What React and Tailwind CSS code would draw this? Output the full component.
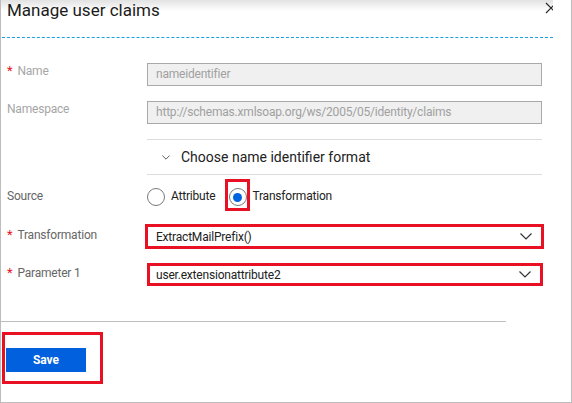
import React from "react";

function Star() {
  return <span className="text-[#e81123] mr-[5px] text-[13px]">*</span>;
}

function Chevron({ w = 12, h = 7 }) {
  return (
    <svg width={w} height={h} viewBox="0 0 12 7" fill="none" stroke="#333" strokeWidth="1.2">
      <path d="M0.5 0.5L6 6L11.5 0.5" />
    </svg>
  );
}

function Radio({ checked }) {
  return (
    <div className="w-[18px] h-[18px] rounded-full border border-[#7a7a7a] bg-white flex items-center justify-center">
      {checked && <div className="w-[9px] h-[9px] rounded-full bg-[#0063e1]" />}
    </div>
  );
}

export default function App() {
  return (
    <div className="w-[572px] h-[403px] bg-white border-l border-r border-b border-[#bdbdbd] flex flex-col overflow-hidden font-['Segoe_UI',Roboto,sans-serif] text-[#222]">
      <div className="w-[552px]">
        {/* Header */}
        <div className="h-[37px] relative overflow-hidden bg-[linear-gradient(to_bottom,#e2e2e2,#ffffff_11px)] pl-[6px]">
          <h1 className="text-[17px] leading-[20px] text-[#1b1b1b]">Manage user claims</h1>
          <svg className="absolute right-[-4px] top-[2px]" width="12" height="12" viewBox="0 0 12 12" stroke="#222" strokeWidth="1.1">
            <path d="M1 1L11 11M11 1L1 11" />
          </svg>
        </div>
        <div className="ml-[1px] border-t border-dashed border-[#1ba1e2]" />

        {/* Form */}
        <div className="pl-[6px] pt-[25px] flex flex-col text-[12px] tracking-[-0.2px]">
          <div className="flex items-start">
            <div className="w-[140px] leading-[16px] text-[#a6a6a6]">
              <Star />Name
            </div>
            <div className="w-[395px] h-[23px] bg-[#f0f0f0] border border-[#a9a9a9] pl-[8px] leading-[21px] text-[#a0a0a0]">
              nameidentifier
            </div>
          </div>

          <div className="flex items-start mt-[15px]">
            <div className="w-[140px] leading-[16px] text-[#a6a6a6]">Namespace</div>
            <div className="w-[395px] h-[23px] bg-[#f0f0f0] border border-[#a9a9a9] pl-[8px] leading-[21px] text-[#a0a0a0] whitespace-nowrap overflow-hidden">
              http://schemas.xmlsoap.org/ws/2005/05/identity/claims
            </div>
          </div>

          <div className="flex mt-[15px]">
            <div className="w-[140px]" />
            <div className="w-[395px] h-[36px] border-t border-b border-[#dcdcdc] flex items-center pl-[15px] gap-[11px]">
              <Chevron w={8} h={5} />
              <span className="text-[14px] tracking-normal text-[#222]">Choose name identifier format</span>
            </div>
          </div>

          <div className="flex items-center mt-[4px] h-[32px]">
            <div className="w-[140px] text-[#666] pt-[2px]">Source</div>
            <div className="flex items-center">
              <div className="pt-[3px]">
                <Radio />
              </div>
              <span className="ml-[6px] pt-[2px] text-[#222]">Attribute</span>
              <div className="ml-[10px] w-[25px] h-[32px] border-[3px] border-[#e81123] flex justify-center pt-[6px]">
                <Radio checked />
              </div>
              <span className="ml-[2px] pt-[2px] text-[#222]">Transformation</span>
            </div>
          </div>

          <div className="flex items-center mt-[13px]">
            <div className="w-[140px] text-[#666] -mt-[4px]">
              <Star />Transformation
            </div>
            <div className="-ml-[2px] w-[399px] h-[25px] border-[3px] border-[#e81123] flex items-center justify-between pl-[8px] pr-[9px]">
              <span className="text-[#222]">ExtractMailPrefix()</span>
              <Chevron />
            </div>
          </div>

          <div className="flex items-center mt-[14px]">
            <div className="w-[140px] text-[#666] -mt-[4px]">
              <Star />Parameter 1
            </div>
            <div className="w-[396px] h-[23px] border-[3px] border-[#e81123] flex items-center justify-between pl-[6px] pr-[9px]">
              <span className="text-[#222]">user.extensionattribute2</span>
              <Chevron />
            </div>
          </div>
        </div>
      </div>

      {/* Footer */}
      <div className="mt-[35px] w-[505px] border-t border-[#bdbdbd]" />
      <div className="mt-[10px] ml-[1px] w-[101px] h-[52px] border-[3px] border-[#e81123] pl-[1px] pt-[12px]">
        <button className="w-[80px] h-[24px] bg-[#0060dd] text-white text-[12px] font-bold leading-[24px]">
          Save
        </button>
      </div>
    </div>
  );
}
